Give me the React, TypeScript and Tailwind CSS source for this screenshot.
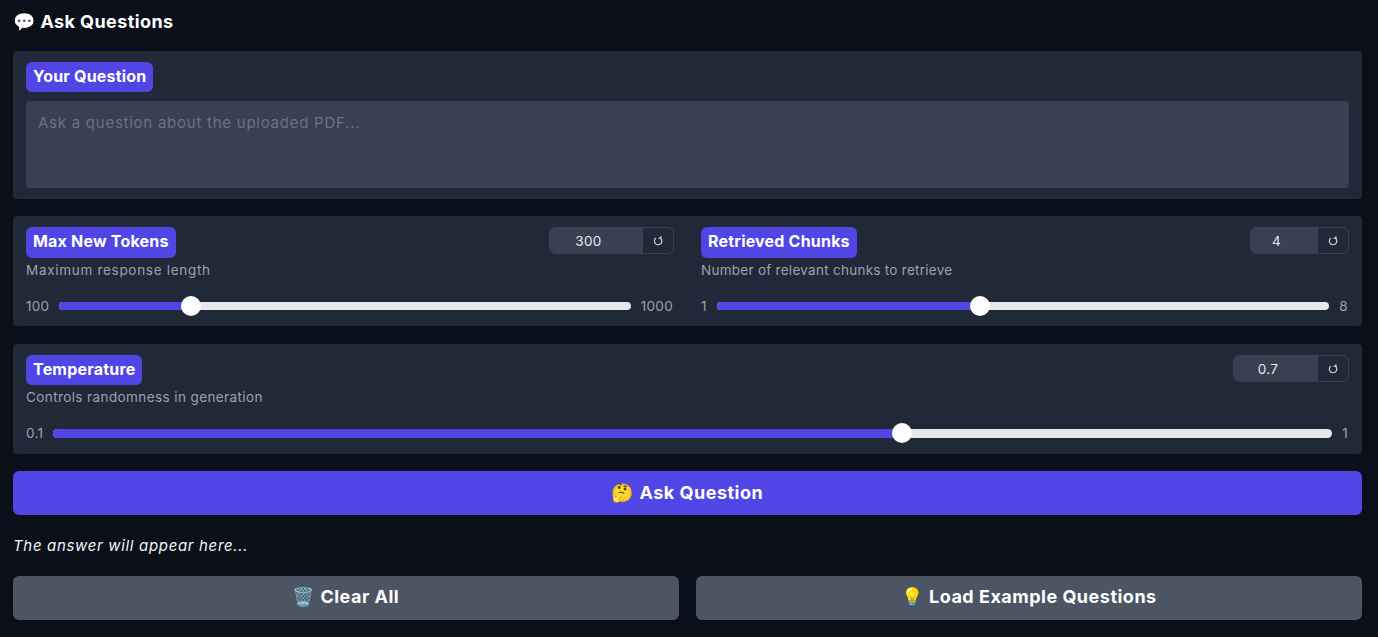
interface SliderProps {
  label: string;
  info: string;
  infoTracking: string;
  value: string;
  min: string;
  max: string;
  percent: number;
  inputWidth: string;
  badgeHeight?: string;
  trackHeight?: string;
}

function Badge({ children, height = 'h-[30px]' }: { children: string; height?: string }) {
  return (
    <span className={`inline-block ${height} rounded-md bg-[#4f46e5] px-[7px] text-[16px] leading-[29px] font-bold tracking-[0.2px] text-white`}>
      {children}
    </span>
  );
}

function ResetIcon() {
  return (
    <svg width="10" height="10" viewBox="0 0 10 10" fill="none" stroke="currentColor" strokeWidth="1.2" strokeLinecap="round">
      <path d="M2.6 2.3A3.7 3.7 0 1 0 7.6 2.3" />
      <path d="M8 .7 7.7 2.4 6 2.2" />
    </svg>
  );
}

function SliderBlock({ label, info, infoTracking, value, min, max, percent, inputWidth, badgeHeight, trackHeight = 'h-2' }: SliderProps) {
  return (
    <div className="flex-1">
      <div className="flex items-start justify-between">
        <div>
          <Badge height={badgeHeight}>{label}</Badge>
          <p className={`mt-[3px] text-[13.5px] leading-[18px] ${infoTracking} text-[#9ca3af]`}>{info}</p>
        </div>
        <div className="flex h-[27px] overflow-hidden rounded-md border border-[#374151]">
          <div className={`${inputWidth} bg-[#374151] pr-4 text-center text-[13.5px] leading-[26px] tracking-[0.3px] text-[#e5e7eb]`}>{value}</div>
          <div className="flex w-[30px] items-center justify-center text-[#d1d5db]">
            <ResetIcon />
          </div>
        </div>
      </div>
      <div className="mt-[17px] flex items-center gap-[10px] text-[13.5px] leading-5 tracking-[0.3px] text-[#9ca3af]">
        <span>{min}</span>
        <div className={`relative ${trackHeight} flex-1 rounded-full bg-[#e5e7eb]`}>
          <div className={`${trackHeight} rounded-full bg-[#4f46e5]`} style={{ width: `${percent}%` }} />
          <div
            className="absolute top-1/2 h-5 w-5 -translate-x-1/2 -translate-y-1/2 rounded-full bg-white"
            style={{ left: `${percent}%` }}
          />
        </div>
        <span className="mr-px">{max}</span>
      </div>
    </div>
  );
}

export default function App() {
  const font = { fontFamily: 'Inter, "Noto Sans", "Noto Color Emoji", sans-serif' };
  return (
    <div className="flex min-h-[637px] flex-col bg-[#0b0f19] pr-4 pl-[13px] text-white" style={font}>
      <h2 className="flex h-[51px] items-start pt-[11px] text-[18px] leading-[22px] font-bold tracking-[0.4px]">💬 Ask Questions</h2>

      <section className="h-[148px] rounded-[4px] bg-[#1f2937] px-[13px] pt-[11px]">
        <Badge>Your Question</Badge>
        <div className="mt-[9px] h-[87px] rounded-[4px] bg-[#374151] px-3 py-3 text-[15px] leading-5 tracking-[0.75px] text-[#6b7280]">
          Ask a question about the uploaded PDF...
        </div>
      </section>

      <section className="mt-[17px] flex h-[110px] gap-[27px] rounded-[4px] bg-[#1f2937] px-[13px] pt-[11px]">
        <SliderBlock label="Max New Tokens" info="Maximum response length" infoTracking="tracking-[0.7px]" value="300" min="100" max="1000" percent={23.1} inputWidth="w-[93px]" badgeHeight="h-[31px]" />
        <SliderBlock label="Retrieved Chunks" info="Number of relevant chunks to retrieve" infoTracking="tracking-[0.27px]" value="4" min="1" max="8" percent={43} inputWidth="w-[67px]" badgeHeight="h-[31px]" />
      </section>

      <section className="mt-[18px] flex h-[110px] rounded-[4px] bg-[#1f2937] px-[13px] pt-[11px]">
        <SliderBlock label="Temperature" info="Controls randomness in generation" infoTracking="tracking-[0.4px]" value="0.7" min="0.1" max="1" percent={66.4} inputWidth="w-[84px]" trackHeight="h-[9px]" />
      </section>

      <button className="mt-[17px] h-11 rounded-md bg-[#4f46e5] pb-[2px] text-[18px] font-bold tracking-[0.5px] text-white">🤔 Ask Question</button>

      <p className="mt-[21px] text-[15px] leading-5 tracking-[0.67px] text-[#f3f4f6] italic">The answer will appear here...</p>

      <div className="mt-5 flex gap-[17px]">
        <button className="h-11 flex-1 rounded-md bg-[#4b5563] pb-1 text-[18px] font-bold tracking-[0.5px] text-white">🗑️ Clear All</button>
        <button className="h-11 flex-1 rounded-md bg-[#4b5563] pb-1 text-[18px] font-bold tracking-[0.5px] text-white">💡 Load Example Questions</button>
      </div>
    </div>
  );
}
